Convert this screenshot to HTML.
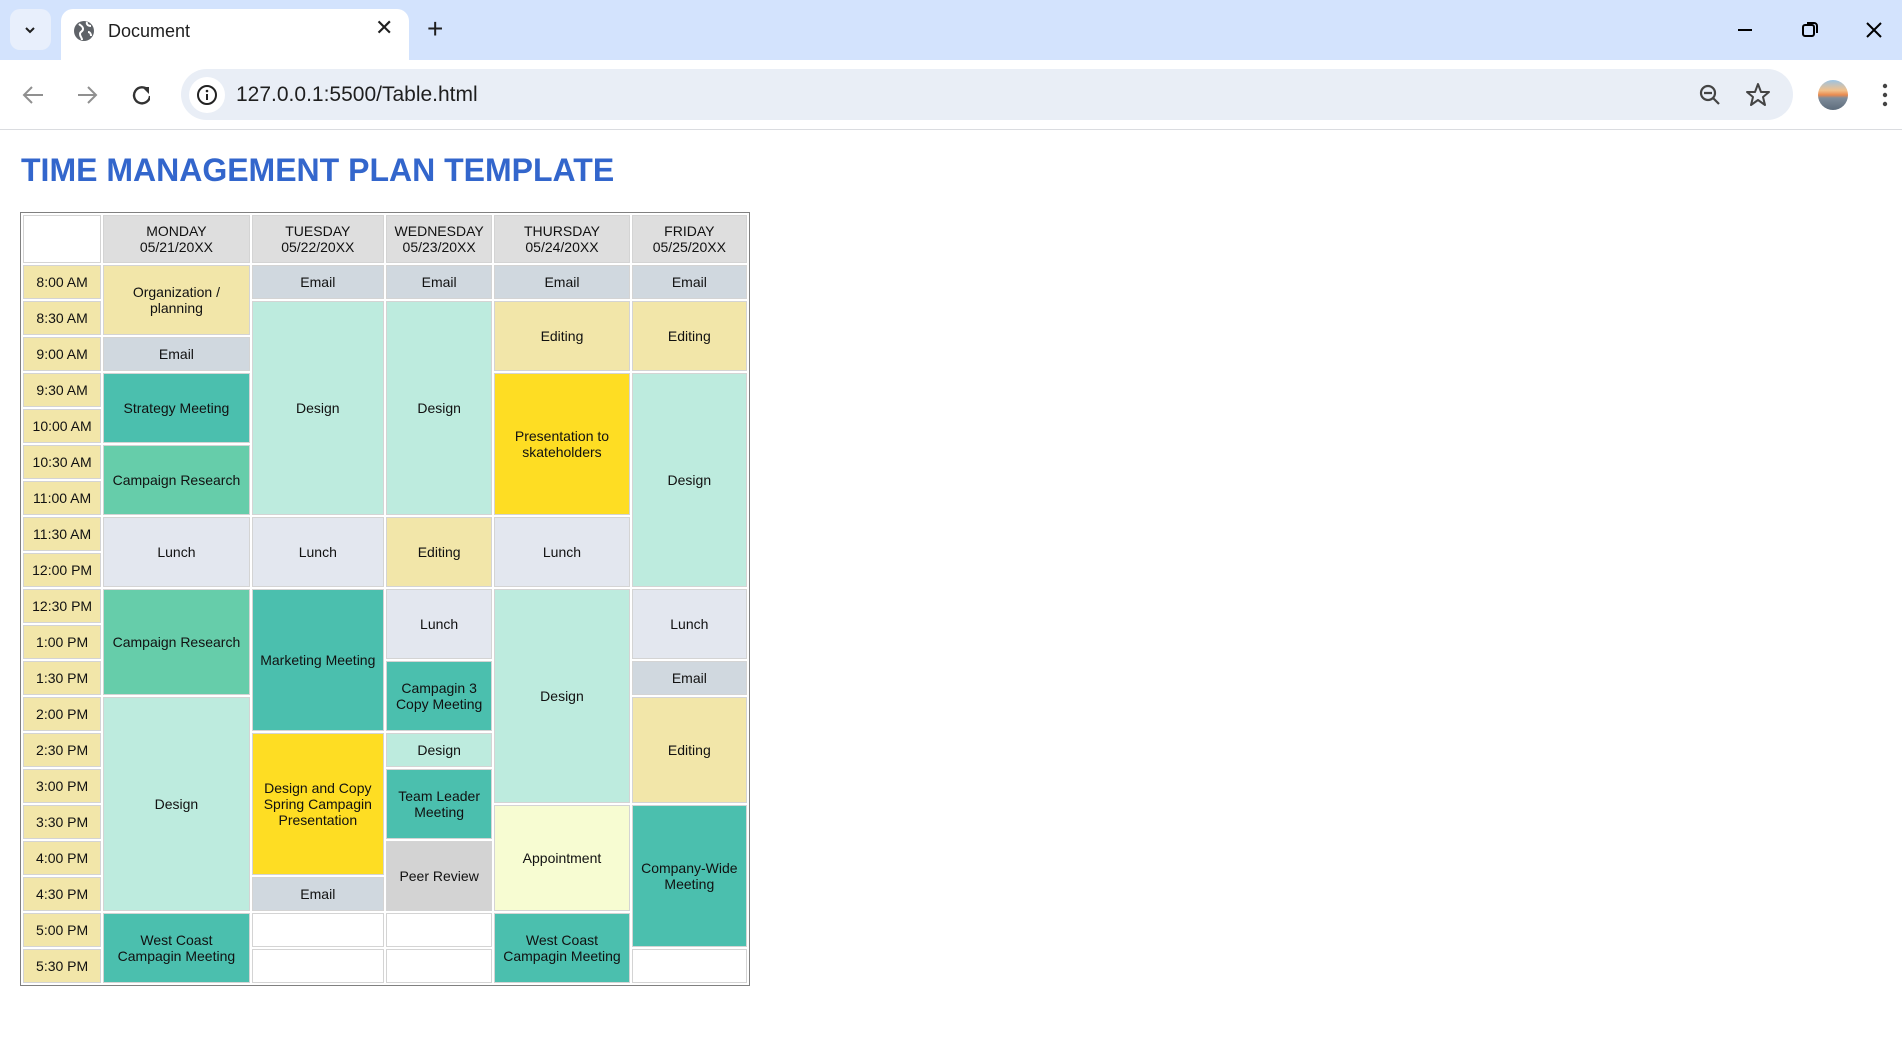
<!DOCTYPE html>
<html><head><meta charset="utf-8"><style>
*{box-sizing:border-box}
body{margin:0;width:1902px;height:1055px;background:#fff;font-family:"Liberation Sans",Arial,sans-serif;overflow:hidden;position:relative}
.tabbar{position:absolute;left:0;top:0;width:1902px;height:60px;background:#d3e3fd}
.tab{position:absolute;left:61px;top:9px;width:348px;height:51px;background:#fff;border-radius:12px 12px 0 0}
.toolbar{position:absolute;left:0;top:60px;width:1902px;height:70px;background:#fff;border-bottom:1px solid #dadce0}
.omni{position:absolute;left:181px;top:69px;width:1612px;height:51px;background:#e9eef6;border-radius:26px}
.t{position:absolute;color:#1f1f1f}
h1{position:absolute;left:21px;top:152px;margin:0;font-size:32px;font-weight:bold;color:#3366cc;line-height:37px;white-space:nowrap}
table{position:absolute;left:20px;top:212px;border:1px solid #808080;border-spacing:2px;table-layout:fixed;width:730px;font-size:14px}
td{border:1px solid #d4d4d4;text-align:center;vertical-align:middle;padding:0 2px;height:34px;line-height:16px;color:#111}
tr.h td{height:48px;background:#dedede}
.tm{background:#f2e6a9}
.em{background:#d0d8df}
.de{background:#bdebde}
.te{background:#4bbfae}
.cr{background:#66cdaa}
.lu{background:#e3e7ef}
.ed{background:#f2e6a9}
.ye{background:#fedd23}
.ap{background:#f7fcd2}
.pr{background:#d3d3d3}
.wh{background:#fff}
</style></head><body>
<div class="tabbar"></div>
<div style="position:absolute;left:10px;top:9px;width:41px;height:41px;background:#e8effc;border-radius:10px"></div>
<svg style="position:absolute;left:22px;top:22px" width="16" height="16" viewBox="0 0 16 16"><path d="M4 6l4 4 4-4" stroke="#1f1f1f" stroke-width="2" fill="none"/></svg>
<div class="tab"></div>
<svg style="position:absolute;left:73px;top:20px" width="22" height="22" viewBox="0 0 22 22"><circle cx="11" cy="11" r="10" fill="#5f6368"/><path d="M6 4c2 2 4 2 4 5s-3 2-3 5 2 3 2 6M14 2c-1 3 2 4 4 4M15 12c2 0 3 2 3 4" stroke="#fff" stroke-width="2" fill="none"/></svg>
<div class="t" style="left:108px;top:21px;font-size:18px">Document</div>
<div class="t" style="left:375px;top:15px;font-size:22px">✕</div>
<div class="t" style="left:427px;top:13px;font-size:28px;font-weight:300">+</div>
<svg style="position:absolute;left:1735px;top:20px" width="150" height="20"><path d="M3 10h14" stroke="#000" stroke-width="2"/><rect x="68" y="5" width="11" height="11" rx="2" stroke="#000" stroke-width="2" fill="none"/><path d="M72 3h7a3 3 0 0 1 3 3v7" stroke="#000" stroke-width="2" fill="none"/><path d="M132 3l14 14M146 3l-14 14" stroke="#000" stroke-width="2"/></svg>
<div class="toolbar"></div>
<svg style="position:absolute;left:20px;top:82px" width="130" height="26"><path d="M23 13H5M12 5l-8 8 8 8" stroke="#909090" stroke-width="2" fill="none"/><path d="M58 13h18M68 5l8 8-8 8" stroke="#909090" stroke-width="2" fill="none"/><path d="M128 8a8 8 0 1 0 2 6" stroke="#333" stroke-width="2.4" fill="none"/><path d="M122 3l7 0 0 7z" fill="#333" transform="translate(0,2)"/></svg>
<div class="omni"></div>
<div style="position:absolute;left:189px;top:77px;width:36px;height:36px;border-radius:50%;background:#fff"></div>
<svg style="position:absolute;left:196px;top:84px" width="22" height="22"><circle cx="11" cy="11" r="9" stroke="#222" stroke-width="2" fill="none"/><path d="M11 10v6" stroke="#222" stroke-width="2"/><circle cx="11" cy="7" r="1.3" fill="#222"/></svg>
<div class="t" style="left:236px;top:83px;font-size:21px">127.0.0.1:5500/Table.html</div>
<svg style="position:absolute;left:1696px;top:82px" width="160" height="28"><circle cx="12" cy="11" r="7" stroke="#444" stroke-width="2.2" fill="none"/><path d="M8 11h8M17 16l6 6" stroke="#444" stroke-width="2.2"/><path d="M62 2l3 8 8 0-6 5 2 8-7-5-7 5 2-8-6-5 8 0z" stroke="#444" stroke-width="2" fill="none" stroke-linejoin="round"/></svg>
<div style="position:absolute;left:1818px;top:80px;width:30px;height:30px;border-radius:50%;background:linear-gradient(#9cc4e4 0%,#f2c08a 35%,#e98a4f 50%,#7f8c9a 60%,#5d6c7c 100%)"></div>
<svg style="position:absolute;left:1880px;top:82px" width="10" height="26"><circle cx="5" cy="4" r="2.2" fill="#444"/><circle cx="5" cy="13" r="2.2" fill="#444"/><circle cx="5" cy="22" r="2.2" fill="#444"/></svg>

<h1>TIME MANAGEMENT PLAN TEMPLATE</h1>
<table>
<colgroup><col style="width:78px"><col style="width:146px"><col style="width:132px"><col style="width:106px"><col style="width:135px"><col style="width:115px"></colgroup>
<tr class="h"><td style="background:#fff"></td><td>MONDAY<br>05/21/20XX</td><td>TUESDAY<br>05/22/20XX</td><td>WEDNESDAY<br>05/23/20XX</td><td>THURSDAY<br>05/24/20XX</td><td>FRIDAY<br>05/25/20XX</td></tr>
<tr><td class="tm">8:00 AM</td><td class="ed" rowspan="2">Organization /<br>planning</td><td class="em">Email</td><td class="em">Email</td><td class="em">Email</td><td class="em">Email</td></tr>
<tr><td class="tm">8:30 AM</td><td class="de" rowspan="6">Design</td><td class="de" rowspan="6">Design</td><td class="ed" rowspan="2">Editing</td><td class="ed" rowspan="2">Editing</td></tr>
<tr><td class="tm">9:00 AM</td><td class="em">Email</td></tr>
<tr><td class="tm">9:30 AM</td><td class="te" rowspan="2">Strategy Meeting</td><td class="ye" rowspan="4">Presentation to<br>skateholders</td><td class="de" rowspan="6">Design</td></tr>
<tr><td class="tm">10:00 AM</td></tr>
<tr><td class="tm">10:30 AM</td><td class="cr" rowspan="2">Campaign Research</td></tr>
<tr><td class="tm">11:00 AM</td></tr>
<tr><td class="tm">11:30 AM</td><td class="lu" rowspan="2">Lunch</td><td class="lu" rowspan="2">Lunch</td><td class="ed" rowspan="2">Editing</td><td class="lu" rowspan="2">Lunch</td></tr>
<tr><td class="tm">12:00 PM</td></tr>
<tr><td class="tm">12:30 PM</td><td class="cr" rowspan="3">Campaign Research</td><td class="te" rowspan="4">Marketing Meeting</td><td class="lu" rowspan="2">Lunch</td><td class="de" rowspan="6">Design</td><td class="lu" rowspan="2">Lunch</td></tr>
<tr><td class="tm">1:00 PM</td></tr>
<tr><td class="tm">1:30 PM</td><td class="te" rowspan="2">Campagin 3<br>Copy Meeting</td><td class="em">Email</td></tr>
<tr><td class="tm">2:00 PM</td><td class="de" rowspan="6">Design</td><td class="ed" rowspan="3">Editing</td></tr>
<tr><td class="tm">2:30 PM</td><td class="ye" rowspan="4">Design and Copy<br>Spring Campagin<br>Presentation</td><td class="de">Design</td></tr>
<tr><td class="tm">3:00 PM</td><td class="te" rowspan="2">Team Leader<br>Meeting</td></tr>
<tr><td class="tm">3:30 PM</td><td class="ap" rowspan="3">Appointment</td><td class="te" rowspan="4">Company-Wide<br>Meeting</td></tr>
<tr><td class="tm">4:00 PM</td><td class="pr" rowspan="2">Peer Review</td></tr>
<tr><td class="tm">4:30 PM</td><td class="em">Email</td></tr>
<tr><td class="tm">5:00 PM</td><td class="te" rowspan="2">West Coast<br>Campagin Meeting</td><td class="wh"></td><td class="wh"></td><td class="te" rowspan="2">West Coast<br>Campagin Meeting</td></tr>
<tr><td class="tm">5:30 PM</td><td class="wh"></td><td class="wh"></td><td class="wh"></td></tr>
</table>
</body></html>
